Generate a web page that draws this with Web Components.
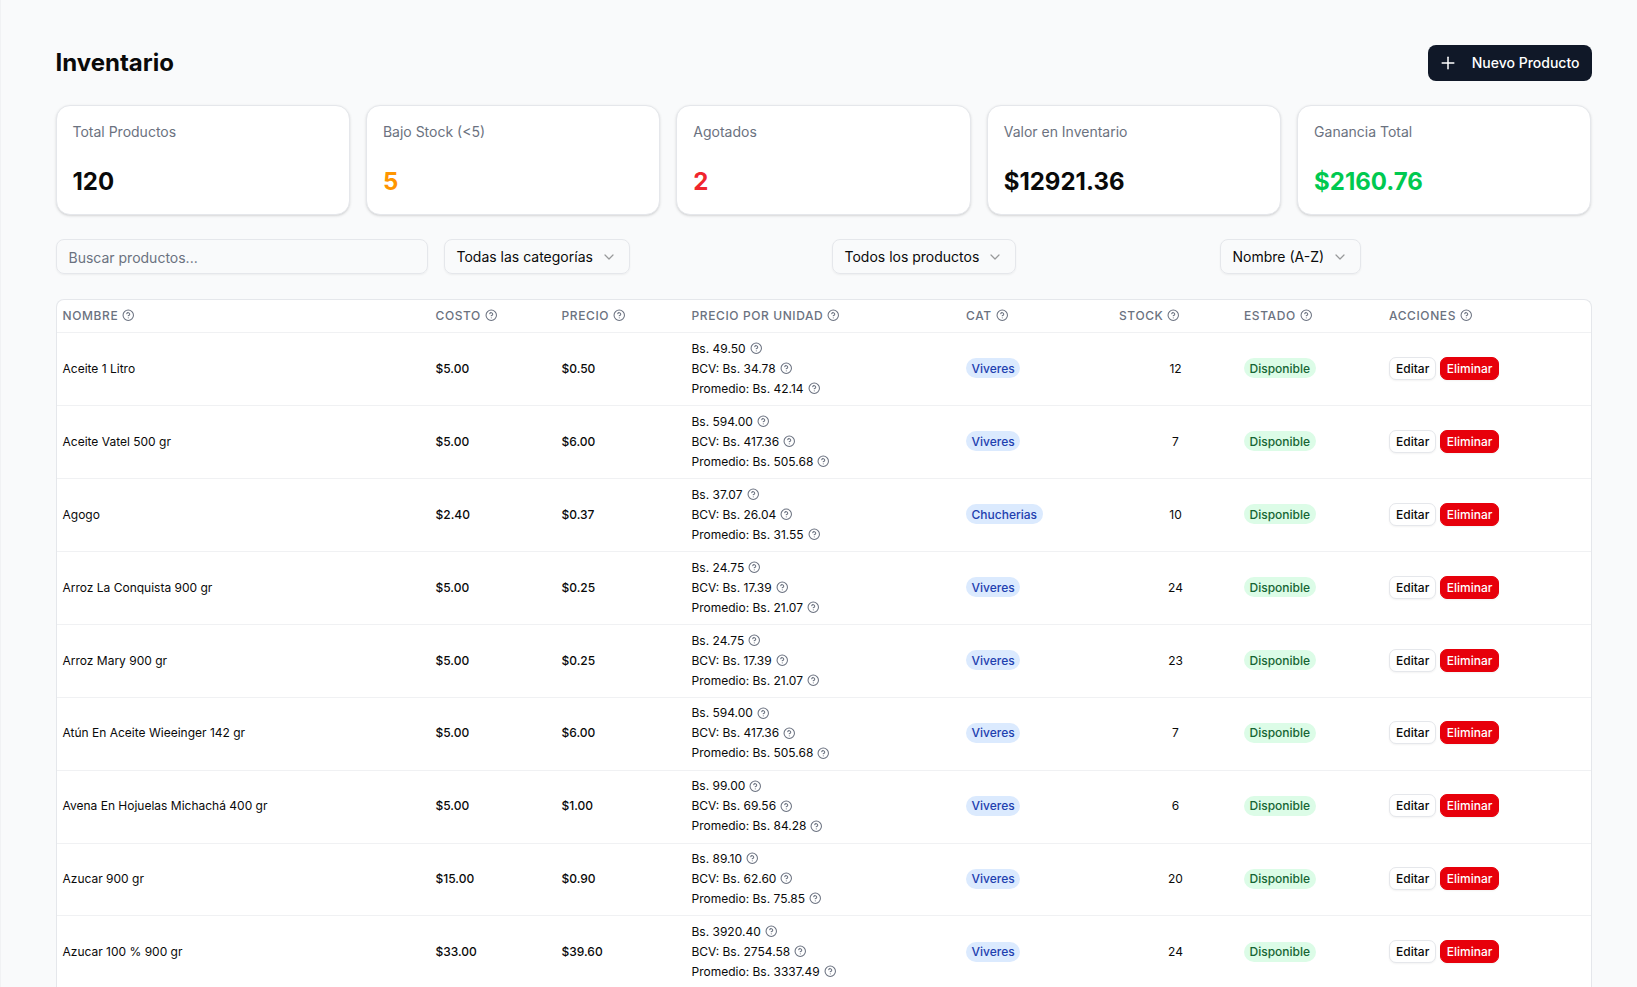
<!DOCTYPE html>
<html lang="es">
<head>
<meta charset="utf-8">
<title>Inventario</title>
<style>
  html, body {
    margin: 0;
    height: 987px;
    overflow: hidden;
    background: #f9fafb;
    font-family: Inter, "Liberation Sans", sans-serif;
    color: #0a0a0a;
  }
</style>
</head>
<body>
<inv-page></inv-page>

<script>
const HELP_PATH = `<circle cx="12" cy="12" r="10"/><path d="M9.09 9a3 3 0 0 1 5.83 1c0 2-3 3-3 3"/><path d="M12 17h.01"/>`;

class HelpIcon extends HTMLElement {
  constructor() {
    super();
    this.attachShadow({ mode: "open" });
  }

  connectedCallback() {
    this.shadowRoot.innerHTML = `
      <style>
        :host { display: inline-flex; flex: none; width: 12.5px; height: 12.5px; color: #6b7280; }
        svg { width: 100%; height: 100%; fill: none; stroke: currentColor; stroke-width: 2; stroke-linecap: round; stroke-linejoin: round; }
      </style>
      <svg viewBox="0 0 24 24">${HELP_PATH}</svg>`;
  }
}

class StatCard extends HTMLElement {
  constructor() {
    super();
    this.attachShadow({ mode: "open" });
  }

  connectedCallback() {
    const color = this.getAttribute("color") || "#0a0a0a";
    this.shadowRoot.innerHTML = `
      <style>
        :host {
          display: block;
          box-sizing: border-box;
          height: 110px;
          padding: 16px;
          background: #fff;
          border: 1px solid #e5e7eb;
          border-radius: 14px;
          box-shadow: 0 1px 3px #0000001f, 0 1px 2px -1px #0000001a;
        }
        .label { font-size: 14px; line-height: 20px; color: #6b7280; }
        .value { margin-top: 24px; font-size: 24px; line-height: 32px; font-weight: 700; color: ${color}; }
      </style>
      <div class="label">${this.getAttribute("label")}</div>
      <div class="value"><slot></slot></div>`;
  }
}

class SelectBox extends HTMLElement {
  constructor() {
    super();
    this.attachShadow({ mode: "open" });
  }

  connectedCallback() {
    this.shadowRoot.innerHTML = `
      <style>
        :host {
          display: inline-flex;
          align-items: center;
          justify-self: start;
          gap: 8px;
          box-sizing: border-box;
          height: 35px;
          padding: 0 12px;
          font-size: 14px;
          border: 1px solid #e5e7eb;
          border-radius: 8px;
          box-shadow: 0 1px 2px #0000000d;
        }
        svg { width: 16px; height: 16px; fill: none; stroke: #0a0a0a; opacity: .4; stroke-width: 1.8; stroke-linecap: round; stroke-linejoin: round; }
      </style>
      <slot></slot>
      <svg viewBox="0 0 24 24"><path d="m6 9 6 6 6-6"/></svg>`;
  }
}

class SearchBox extends HTMLElement {
  constructor() {
    super();
    this.attachShadow({ mode: "open" });
  }

  connectedCallback() {
    this.shadowRoot.innerHTML = `
      <style>
        :host {
          display: flex;
          align-items: center;
          box-sizing: border-box;
          height: 35px;
          padding: 1px 12px 0;
          font-size: 14px;
          color: #6b7280;
          border: 1px solid #e5e7eb;
          border-radius: 8px;
          box-shadow: 0 1px 2px #0000000d;
        }
      </style>
      <slot></slot>`;
  }
}

class HeadCell extends HTMLElement {
  constructor() {
    super();
    this.attachShadow({ mode: "open" });
  }

  connectedCallback() {
    this.shadowRoot.innerHTML = `
      <style>
        :host {
          display: flex;
          align-items: center;
          gap: 4px;
          padding: 0 0 2px 5px;
          font-size: 12px;
          font-weight: 500;
          letter-spacing: .05em;
          color: #6b7280;
          text-transform: uppercase;
        }
      </style>
      <slot></slot>
      <help-icon></help-icon>`;
  }
}

class PriceLine extends HTMLElement {
  constructor() {
    super();
    this.attachShadow({ mode: "open" });
  }

  connectedCallback() {
    this.shadowRoot.innerHTML = `
      <style>
        :host { display: flex; align-items: center; gap: 4px; height: 20px; }
      </style>
      <slot></slot>
      <help-icon></help-icon>`;
  }
}

class InvBadge extends HTMLElement {
  constructor() {
    super();
    this.attachShadow({ mode: "open" });
  }

  connectedCallback() {
    const green = this.getAttribute("tone") === "green";
    this.shadowRoot.innerHTML = `
      <style>
        :host {
          display: inline-flex;
          align-items: center;
          height: 20px;
          padding: 0 5.5px;
          border-radius: 999px;
          font-weight: 500;
          background: ${green ? "#dcfce7" : "#dbeafe"};
          color: ${green ? "#166534" : "#1e40af"};
        }
      </style>
      <slot></slot>`;
  }
}

class InvButton extends HTMLElement {
  constructor() {
    super();
    this.attachShadow({ mode: "open" });
  }

  connectedCallback() {
    const danger = this.hasAttribute("danger");
    this.shadowRoot.innerHTML = `
      <style>
        :host {
          display: inline-flex;
          align-items: center;
          justify-content: center;
          box-sizing: border-box;
          height: 23px;
          padding: 0 6px;
          border-radius: 7px;
          font-weight: 500;
          background: ${danger ? "#e7000b" : "#fff"};
          color: ${danger ? "#fff" : "#0a0a0a"};
          border: 1px solid ${danger ? "#e7000b" : "#e5e7eb"};
          box-shadow: 0 1px 2px #0000000d;
        }
      </style>
      <slot></slot>`;
  }
}

class ProductRow extends HTMLElement {
  constructor() {
    super();
    this.attachShadow({ mode: "open" });
  }

  connectedCallback() {
    const [name, costo, precio, bs, bcv, prom, cat, stock] = JSON.parse(this.getAttribute("data"));
    this.shadowRoot.innerHTML = `
      <style>
        :host {
          display: grid;
          grid-template-columns: var(--cols);
          height: 72.9px;
          padding-bottom: 1.5px;
          box-sizing: border-box;
          align-items: center;
          font-size: 12px;
          border-bottom: 1px solid #f0f1f3;
        }
        .cell { padding-left: 5px; }
        .name { padding-left: 6px; }
        .num { font-weight: 450; }
        .stock { text-align: center; padding: 0 7px 0 5px; }
        .actions { display: flex; gap: 3.5px; }
      </style>
      <div class="cell name">${name}</div>
      <div class="cell num">$${costo}</div>
      <div class="cell num">$${precio}</div>
      <div class="cell">
        <price-line>Bs. ${bs}</price-line>
        <price-line>BCV: Bs. ${bcv}</price-line>
        <price-line>Promedio: Bs. ${prom}</price-line>
      </div>
      <div class="cell"><inv-badge>${cat}</inv-badge></div>
      <div class="stock">${stock}</div>
      <div class="cell"><inv-badge tone="green">Disponible</inv-badge></div>
      <div class="cell actions"><inv-button>Editar</inv-button><inv-button danger>Eliminar</inv-button></div>`;
  }
}

const PRODUCTS = [
  ["Aceite 1 Litro", "5.00", "0.50", "49.50", "34.78", "42.14", "Viveres", 12],
  ["Aceite Vatel 500 gr", "5.00", "6.00", "594.00", "417.36", "505.68", "Viveres", 7],
  ["Agogo", "2.40", "0.37", "37.07", "26.04", "31.55", "Chucherias", 10],
  ["Arroz La Conquista 900 gr", "5.00", "0.25", "24.75", "17.39", "21.07", "Viveres", 24],
  ["Arroz Mary 900 gr", "5.00", "0.25", "24.75", "17.39", "21.07", "Viveres", 23],
  ["Atún En Aceite Wieeinger 142 gr", "5.00", "6.00", "594.00", "417.36", "505.68", "Viveres", 7],
  ["Avena En Hojuelas Michachá 400 gr", "5.00", "1.00", "99.00", "69.56", "84.28", "Viveres", 6],
  ["Azucar 900 gr", "15.00", "0.90", "89.10", "62.60", "75.85", "Viveres", 20],
  ["Azucar 100 % 900 gr", "33.00", "39.60", "3920.40", "2754.58", "3337.49", "Viveres", 24],
];

class ProductTable extends HTMLElement {
  constructor() {
    super();
    this.attachShadow({ mode: "open" });
  }

  connectedCallback() {
    const heads = ["Nombre", "Costo", "Precio", "Precio por unidad", "Cat", "Stock", "Estado", "Acciones"];
    this.shadowRoot.innerHTML = `
      <style>
        :host {
          --cols: 374px 126px 130px 274.5px 153px 125px 145px 206.5px;
          display: block;
          background: #fff;
          border: 1px solid #e5e7eb;
          border-bottom: 0;
          border-radius: 8px 8px 0 0;
        }
        .head {
          display: grid;
          grid-template-columns: var(--cols);
          height: 32px;
          border-bottom: 1px solid #f0f1f3;
        }
        head-cell:first-child { padding-left: 6px; }
      </style>
      <div class="head">${heads.map(h => `<head-cell>${h}</head-cell>`).join("")}</div>
      ${PRODUCTS.map(p => `<product-row data='${JSON.stringify(p)}'></product-row>`).join("")}`;
  }
}

class InvPage extends HTMLElement {
  constructor() {
    super();
    this.attachShadow({ mode: "open" });
  }

  connectedCallback() {
    this.shadowRoot.innerHTML = `
      <style>
        :host {
          display: block;
          box-sizing: border-box;
          width: 1637px;
          padding: 45px 45.5px 0 54.5px;
          border-left: 1px solid #f1f2f4;
        }
        .top { display: flex; justify-content: space-between; align-items: center; height: 36px; }
        h1 { margin: 0; font-size: 24px; line-height: 32px; font-weight: 700; }
        .new {
          display: flex;
          align-items: center;
          gap: 14px;
          box-sizing: border-box;
          height: 36px;
          padding: 0 12px 1px 10px;
          border-radius: 8px;
          background: #101828;
          color: #fff;
          font-size: 14px;
          font-weight: 500;
        }
        .new svg { width: 20px; height: 20px; fill: none; stroke: currentColor; stroke-width: 1.8; stroke-linecap: round; stroke-linejoin: round; }
        .stats { display: grid; grid-template-columns: repeat(5, 1fr); gap: 16px; margin-top: 24px; }
        .filters { display: grid; grid-template-columns: repeat(4, 1fr); gap: 16px; margin-top: 24px; }
        product-table { margin-top: 25.3px; }
      </style>
      <div class="top">
        <h1>Inventario</h1>
        <div class="new">
          <svg viewBox="0 0 24 24"><path d="M5 12h14"/><path d="M12 5v14"/></svg>
          Nuevo Producto
        </div>
      </div>
      <div class="stats">
        <stat-card label="Total Productos">120</stat-card>
        <stat-card label="Bajo Stock (&lt;5)" color="#ff9500">5</stat-card>
        <stat-card label="Agotados" color="#f0252d">2</stat-card>
        <stat-card label="Valor en Inventario">$12921.36</stat-card>
        <stat-card label="Ganancia Total" color="#00c950">$2160.76</stat-card>
      </div>
      <div class="filters">
        <search-box>Buscar productos...</search-box>
        <select-box>Todas las categorías</select-box>
        <select-box>Todos los productos</select-box>
        <select-box>Nombre (A-Z)</select-box>
      </div>
      <product-table></product-table>`;
  }
}

customElements.define("help-icon", HelpIcon);
customElements.define("stat-card", StatCard);
customElements.define("select-box", SelectBox);
customElements.define("search-box", SearchBox);
customElements.define("head-cell", HeadCell);
customElements.define("price-line", PriceLine);
customElements.define("inv-badge", InvBadge);
customElements.define("inv-button", InvButton);
customElements.define("product-row", ProductRow);
customElements.define("product-table", ProductTable);
customElements.define("inv-page", InvPage);
</script>
</body>
</html>
